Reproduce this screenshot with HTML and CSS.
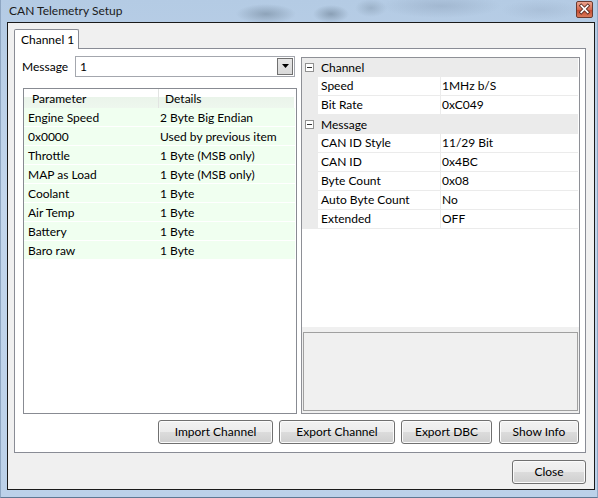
FILE: index.html
```html
<!DOCTYPE html>
<html>
<head>
<meta charset="utf-8">
<title>CAN Telemetry Setup</title>
<link rel="stylesheet" href="styles.css">
</head>
<body>
<div class="frame">
  <div class="titlebar">
    <span class="title">CAN Telemetry Setup</span>
    <span class="xbtn">
      <svg width="16" height="16" viewBox="0 0 16 16">
        <path d="M4.5 4.5 L11.5 11.5 M11.5 4.5 L4.5 11.5" stroke="#5a2a20" stroke-width="3.6" stroke-linecap="square"/>
        <path d="M4.5 4.5 L11.5 11.5 M11.5 4.5 L4.5 11.5" stroke="#ffffff" stroke-width="1.8" stroke-linecap="square"/>
      </svg>
    </span>
  </div>
  <div class="client">
    <div class="tabs">
      <div class="tab">Channel 1</div>
    </div>
    <div class="tabpage">
      <div class="main">
        <div class="leftcol">
          <div class="msgrow">
            <span class="msglabel">Message</span>
            <div class="combo">
              <span class="combo-val">1</span>
              <span class="combo-btn">
                <svg width="7" height="4" viewBox="0 0 7 4"><path d="M0 0 H7 L3.5 4 Z" fill="#000"/></svg>
              </span>
            </div>
          </div>
          <div class="list">
            <div class="lhead">
              <div class="h1">Parameter</div>
              <div class="h2">Details</div>
            </div>
            <div class="lrow"><span class="c1">Engine Speed</span><span class="c2">2 Byte Big Endian</span></div>
            <div class="lrow"><span class="c1">0x0000</span><span class="c2">Used by previous item</span></div>
            <div class="lrow"><span class="c1">Throttle</span><span class="c2">1 Byte (MSB only)</span></div>
            <div class="lrow"><span class="c1">MAP as Load</span><span class="c2">1 Byte (MSB only)</span></div>
            <div class="lrow"><span class="c1">Coolant</span><span class="c2">1 Byte</span></div>
            <div class="lrow"><span class="c1">Air Temp</span><span class="c2">1 Byte</span></div>
            <div class="lrow"><span class="c1">Battery</span><span class="c2">1 Byte</span></div>
            <div class="lrow"><span class="c1">Baro raw</span><span class="c2">1 Byte</span></div>
          </div>
        </div>
        <div class="pgrid">
          <div class="pg-rows">
            <div class="cat"><span class="minus"></span><span class="catname">Channel</span></div>
            <div class="prow"><span class="pn">Speed</span><span class="pv">1MHz b/S</span></div>
            <div class="prow"><span class="pn">Bit Rate</span><span class="pv">0xC049</span></div>
            <div class="cat"><span class="minus"></span><span class="catname">Message</span></div>
            <div class="prow"><span class="pn">CAN ID Style</span><span class="pv">11/29 Bit</span></div>
            <div class="prow"><span class="pn">CAN ID</span><span class="pv">0x4BC</span></div>
            <div class="prow"><span class="pn">Byte Count</span><span class="pv">0x08</span></div>
            <div class="prow"><span class="pn">Auto Byte Count</span><span class="pv">No</span></div>
            <div class="prow"><span class="pn">Extended</span><span class="pv">OFF</span></div>
          </div>
          <div class="pg-desc"><div class="pg-desc-box"></div></div>
        </div>
      </div>
      <div class="btnrow">
        <button class="btn b-import">Import Channel</button>
        <button class="btn b-export">Export Channel</button>
        <button class="btn b-dbc">Export DBC</button>
        <button class="btn b-info">Show Info</button>
      </div>
    </div>
    <div class="footer">
      <button class="btn b-close">Close</button>
    </div>
  </div>
</div>
</body>
</html>
```
FILE: styles.css
```css
* { box-sizing: border-box; }
html, body {
  margin: 0;
  padding: 0;
  width: 598px;
  height: 498px;
  overflow: hidden;
  font-family: "Lato", "Open Sans", "Liberation Sans", sans-serif;
  font-size: 12px;
  color: #000;
}
.frame {
  width: 598px;
  height: 498px;
  padding: 0 4px 7px 6px;
  display: flex;
  flex-direction: column;
  background:
    radial-gradient(ellipse 30px 10px at 265px 14px, rgba(110,130,150,0.55), rgba(110,130,150,0) 100%),
    radial-gradient(ellipse 18px 9px at 330px 14px, rgba(110,130,150,0.6), rgba(110,130,150,0) 100%),
    radial-gradient(ellipse 16px 9px at 370px 8px, rgba(120,140,160,0.4), rgba(120,140,160,0) 100%),
    radial-gradient(ellipse 60px 12px at 440px 6px, rgba(140,160,185,0.45), rgba(140,160,185,0) 100%),
    radial-gradient(ellipse 40px 10px at 540px 10px, rgba(150,170,195,0.35), rgba(150,170,195,0) 100%),
    linear-gradient(180deg, #b4cbe4 0%, #c3d6ec 40%, #bcd1e9 100%);
  border-left: 1px solid #8ea6c2;
  border-right: 1px solid #8ea6c2;
  border-bottom: 1px solid #5f7893;
}
.titlebar {
  height: 22px;
  display: flex;
  align-items: center;
  justify-content: space-between;
  margin-left: -5px;
  padding-left: 7px;
}
.title {
  font-size: 12px;
  color: #1b1b1b;
  margin-top: -1px;
}
.xbtn {
  width: 17px;
  height: 17px;
  margin-top: -3px;
  border: 1px solid #6a3a30;
  border-radius: 2px;
  background: linear-gradient(180deg, #eba48f 0%, #d6694f 50%, #c4462c 51%, #d97a5a 100%);
  display: flex;
  align-items: center;
  justify-content: center;
}
.xbtn svg { display: block; }
.client {
  width: 588px;
  height: 469px;
  border: 1px solid #1a1a1a;
  background: #f0f0f0;
  display: flex;
  flex-direction: column;
  padding: 6px 8px 0 6px;
}
.tabs {
  display: flex;
  height: 19px;
}
.tab {
  position: relative;
  z-index: 1;
  width: 65px;
  height: 20px;
  border: 1px solid #898c95;
  border-bottom: none;
  border-radius: 2px 2px 0 0;
  background: #ffffff;
  padding: 2px 0 0 6px;
  line-height: 16px;
}
.tabpage {
  width: 572px;
  height: 405px;
  border: 1px solid #898c95;
  background: #ffffff;
  padding: 7px 5px 0 8px;
  display: flex;
  flex-direction: column;
}
.main {
  display: flex;
  gap: 4px;
  height: 358px;
}
.leftcol {
  width: 274px;
  display: flex;
  flex-direction: column;
}
.msgrow {
  display: flex;
  align-items: center;
  height: 21px;
}
.msglabel {
  width: 52px;
  margin-left: -1px;
  padding-top: 1px;
}
.combo {
  width: 220px;
  height: 21px;
  margin-left: 1px;
  border: 1px solid #a4a7ae;
  background: #fff;
  display: flex;
  align-items: center;
  justify-content: space-between;
}
.combo-val {
  padding-left: 4px;
  padding-top: 1px;
}
.combo-btn {
  width: 16px;
  height: 17px;
  margin-right: 1px;
  border: 1px solid #707070;
  background: linear-gradient(180deg, #e6e6e6 0%, #d9d9d9 100%);
  display: flex;
  align-items: center;
  justify-content: center;
}
.combo-btn svg { display: block; }
.list {
  margin-top: 11px;
  height: 326px;
  border: 1px solid #888b92;
  background: #fff;
  padding-right: 1px;
}
.lhead {
  display: flex;
  height: 19px;
  margin-right: 1px;
  background: linear-gradient(180deg, #ffffff 0%, #ffffff 40%, #eaf4ea 41%, #eef7ee 100%);
  line-height: 19px;
}
.h1 {
  width: 135px;
  padding-left: 8px;
  border-right: 1px solid #e2e4e2;
}
.h2 {
  padding-left: 6px;
}
.lrow {
  display: flex;
  height: 19px;
  background: #f0fff0;
  border-bottom: 1px solid #ffffff;
  padding-top: 1px;
  line-height: 18px;
}
.c1 {
  width: 135px;
  padding-left: 4px;
}
.c2 {
  padding-left: 1px;
}
.pgrid {
  margin-top: 1px;
  width: 279px;
  height: 357px;
  border: 1px solid #8e9096;
  display: flex;
  flex-direction: column;
}
.pg-rows {
  height: 269px;
  background: #fff;
}
.cat {
  height: 19px;
  background: #ebebeb;
  display: flex;
  align-items: center;
  margin-right: 1px;
}
.minus {
  position: relative;
  width: 9px;
  height: 9px;
  margin-left: 3px;
  border: 1px solid #919191;
  background: #fff;
}
.minus::after {
  content: "";
  position: absolute;
  left: 1px;
  top: 3px;
  width: 5px;
  height: 1px;
  background: #333;
}
.catname {
  padding-left: 7px;
}
.prow {
  height: 19px;
  display: flex;
  background: #ebebeb;
  padding-left: 16px;
  padding-bottom: 1px;
  margin-right: 1px;
  line-height: 18px;
}
.pn {
  width: 122px;
  background: #fff;
  padding-left: 3px;
  margin-right: 1px;
}
.pv {
  flex: 1;
  background: #fff;
  padding-left: 1px;
}
.pg-desc {
  flex: 1;
  background: #f0f0f0;
  padding: 5px 1px 2px 1px;
}
.pg-desc-box {
  height: 100%;
  border: 1px solid #a0a0a0;
  background: #f0f0f0;
}
.btnrow {
  display: flex;
  justify-content: flex-end;
  margin-top: 6px;
  padding-right: 1px;
}
.btn {
  height: 24px;
  border: 1px solid #707070;
  border-radius: 3px;
  background: linear-gradient(180deg, #f2f2f2 0%, #ebebeb 48%, #dcdcdc 50%, #cfcfcf 100%);
  box-shadow: inset 0 0 0 1px #fbfbfb;
  font-family: inherit;
  font-size: 12px;
  font-weight: 400;
  color: #000;
  padding: 0;
  text-align: center;
}
.b-import { width: 115px; }
.b-export { width: 116px; margin-left: 6px; }
.b-dbc { width: 91px; margin-left: 6px; }
.b-info { width: 80px; margin-left: 7px; }
.footer {
  display: flex;
  justify-content: flex-end;
  margin-top: 7px;
}
.b-close { width: 74px; }
```
